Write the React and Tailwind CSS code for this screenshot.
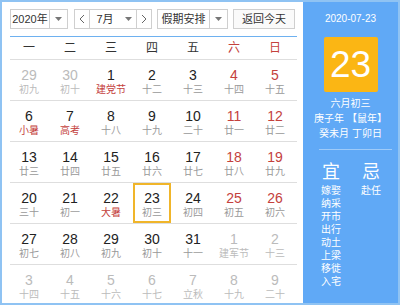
import React from 'react';

const weekDays = ['一', '二', '三', '四', '五', '六', '日'];

// out: not this month, red: red number, hol: red lunar label
const rows = [
  [
    { d: 29, l: '初九', out: true },
    { d: 30, l: '初十', out: true },
    { d: 1, l: '建党节', hol: true },
    { d: 2, l: '十二' },
    { d: 3, l: '十三' },
    { d: 4, l: '十四', red: true },
    { d: 5, l: '十五', red: true },
  ],
  [
    { d: 6, l: '小暑', hol: true },
    { d: 7, l: '高考', hol: true },
    { d: 8, l: '十八' },
    { d: 9, l: '十九' },
    { d: 10, l: '二十' },
    { d: 11, l: '廿一', red: true },
    { d: 12, l: '廿二', red: true },
  ],
  [
    { d: 13, l: '廿三' },
    { d: 14, l: '廿四' },
    { d: 15, l: '廿五' },
    { d: 16, l: '廿六' },
    { d: 17, l: '廿七' },
    { d: 18, l: '廿八', red: true },
    { d: 19, l: '廿九', red: true },
  ],
  [
    { d: 20, l: '三十' },
    { d: 21, l: '初一' },
    { d: 22, l: '大暑', hol: true },
    { d: 23, l: '初三', today: true },
    { d: 24, l: '初四' },
    { d: 25, l: '初五', red: true },
    { d: 26, l: '初六', red: true },
  ],
  [
    { d: 27, l: '初七' },
    { d: 28, l: '初八' },
    { d: 29, l: '初九' },
    { d: 30, l: '初十' },
    { d: 31, l: '十一' },
    { d: 1, l: '建军节', out: true },
    { d: 2, l: '十三', out: true },
  ],
  [
    { d: 3, l: '十四', out: true },
    { d: 4, l: '十五', out: true },
    { d: 5, l: '十六', out: true },
    { d: 6, l: '十七', out: true },
    { d: 7, l: '立秋', out: true },
    { d: 8, l: '十九', out: true },
    { d: 9, l: '二十', out: true },
  ],
];

const yi = ['嫁娶', '纳采', '开市', '出行', '动土', '上梁', '移徙', '入宅'];
const ji = ['赴任'];

const Caret = () => (
  <svg width="7" height="4" viewBox="0 0 7 4">
    <path d="M0 0h7L3.5 4z" fill="#777" />
  </svg>
);

const Chevron = ({ left }) => (
  <svg width="6" height="10" viewBox="0 0 6 10">
    <path d={left ? 'M5 1L1 5l4 4' : 'M1 1l4 4-4 4'} fill="none" stroke="#666" strokeWidth="1" />
  </svg>
);

const DayCell = ({ day }) => {
  let numColor = 'text-[#222]';
  let lunarColor = 'text-[#999]';
  if (day.red) numColor = 'text-[#c4413d]';
  if (day.hol) lunarColor = 'text-[#c4413d]';
  if (day.out) {
    numColor = 'text-[#bbb]';
    lunarColor = 'text-[#bbb]';
  }
  return (
    <div className="w-[41px]">
      <div
        className={`flex h-[40px] w-[38px] flex-col items-center border-2 pt-[5px] ${
          day.today ? 'border-[#f0b52a]' : 'border-transparent'
        }`}
      >
        <span className={`text-[14px] leading-[17px] ${numColor}`}>{day.d}</span>
        <span className={`text-[10px] leading-[12px] ${lunarColor}`}>{day.l}</span>
      </div>
    </div>
  );
};

export default function App() {
  return (
    <div className="h-[308px] w-[400px] bg-white font-['Liberation_Sans','Noto_Sans_CJK_SC',sans-serif]">
      <div className="flex h-[305px] overflow-hidden border-2 border-[#8fc3f3]">
        {/* calendar */}
        <div className="w-[301px] shrink-0 bg-white pl-[8px] pr-[6px] pt-[7px]">
          <div className="flex h-[20px] items-center text-[11px] text-[#333]">
            <div className="flex h-full w-[58px] border border-[#cfcfcf]">
              <span className="flex flex-1 items-center justify-center border-r border-[#cfcfcf]">2020年</span>
              <span className="flex w-[17px] items-center justify-center">
                <Caret />
              </span>
            </div>
            <div className="ml-[6px] flex h-full w-[78px] border border-[#cfcfcf]">
              <span className="flex w-[15px] items-center justify-center border-r border-[#cfcfcf]">
                <Chevron left />
              </span>
              <span className="flex flex-1 items-center border-r border-[#cfcfcf]">
                <span className="w-[30px] text-center">7月</span>
                <span className="flex flex-1 items-center justify-center">
                  <Caret />
                </span>
              </span>
              <span className="flex w-[14px] items-center justify-center">
                <Chevron />
              </span>
            </div>
            <div className="ml-[5px] flex h-full w-[71px] border border-[#cfcfcf]">
              <span className="flex flex-1 items-center justify-center border-r border-[#cfcfcf]">假期安排</span>
              <span className="flex w-[17px] items-center justify-center">
                <Caret />
              </span>
            </div>
            <div className="ml-[5px] flex h-full w-[62px] items-center justify-center border border-[#cfcfcf] bg-[#fafafa]">
              返回今天
            </div>
          </div>

          <div className="mt-[7px] flex h-[24px] items-center border-t border-b border-t-[#6eb1f0] border-b-[#dedede] text-[12px]">
            {weekDays.map((w, i) => (
              <span
                key={w}
                className={`w-[38px] text-center ${i > 4 ? 'text-[#c4413d]' : 'text-[#333]'} ${i < 6 ? 'mr-[3px]' : ''}`}
              >
                {w}
              </span>
            ))}
          </div>

          {rows.map((row, r) => (
            <div key={r} className={`flex h-[41px] ${r < rows.length - 1 ? 'border-b border-[#dedede]' : ''}`}>
              {row.map((day, i) => (
                <DayCell key={i} day={day} />
              ))}
            </div>
          ))}
        </div>

        {/* side panel */}
        <div className="flex flex-1 flex-col bg-[#60a9f6] pt-[11px] text-white">
          <div className="text-center text-[10px] leading-[12px]">2020-07-23</div>
          <div className="mx-auto mt-[12px] flex h-[55px] w-[54px] items-center justify-center rounded-[2px] bg-[#fbb614] text-[37px] leading-none">
            23
          </div>
          <div className="mt-[4px] text-center text-[10px] leading-[15px]">
            <div>六月初三</div>
            <div>庚子年 【鼠年】</div>
            <div>癸未月 丁卯日</div>
          </div>
          <div className="ml-[16px] mr-[6px] mt-[8px] border-t border-white/40" />
          <div className="mt-[11px] flex pl-[8px]">
            <div className="flex w-[40px] flex-col items-center">
              <span className="text-[18px] leading-[22px]">宜</span>
              <div className="mt-[1px] flex flex-col text-[10px] leading-[13px]">
                {yi.map((t) => (
                  <span key={t}>{t}</span>
                ))}
              </div>
            </div>
            <div className="flex w-[40px] flex-col items-center">
              <span className="text-[18px] leading-[22px]">忌</span>
              <div className="mt-[1px] flex flex-col text-[10px] leading-[13px]">
                {ji.map((t) => (
                  <span key={t}>{t}</span>
                ))}
              </div>
            </div>
          </div>
        </div>
      </div>
    </div>
  );
}
